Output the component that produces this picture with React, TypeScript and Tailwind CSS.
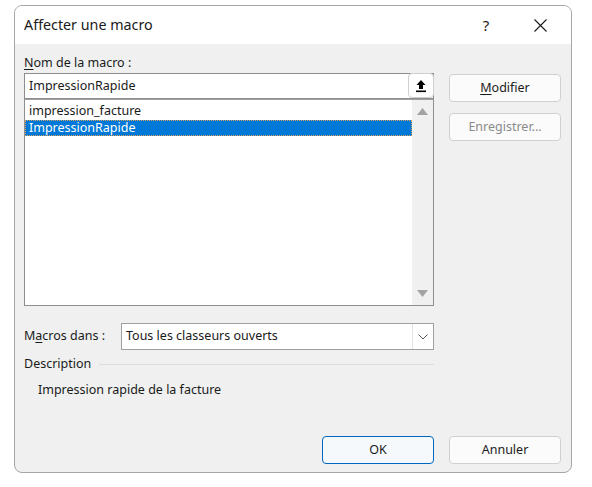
import React from "react";

const font = { fontFamily: '"Noto Sans", "Open Sans", sans-serif' };

function UploadIcon() {
  return (
    <svg width="12" height="14" viewBox="0 0 12 14">
      <path d="M6 1 L1.5 6 H4 V10 H8 V6 H10.5 Z" fill="#000" />
      <rect x="1" y="11.5" width="10" height="1.6" fill="#000" />
    </svg>
  );
}

function Btn({ children, disabled, primary, w = "w-[112px]" }: { children: React.ReactNode; disabled?: boolean; primary?: boolean; w?: string }) {
  return (
    <div
      className={`${w} h-[28px] flex items-center justify-center rounded-[4px] text-[12.5px] ${
        primary ? "border border-[#0067c0] bg-[#f6f9fc] text-[#1a1a1a]" : "border border-[#d0d0d0] bg-[#fbfbfb]"
      } ${disabled ? "text-[#8a8a8a]" : "text-[#1a1a1a]"}`}
    >
      {children}
    </div>
  );
}

export default function App() {
  return (
    <div className="w-[592px] h-[487px] bg-white" style={font}>
      <div className="pt-[5px] pl-[14px]">
        <div className="w-[558px] h-[468px] rounded-[8px] border border-[#a6a6a6] overflow-hidden flex flex-col bg-[#f0f0f0]">
          {/* Title bar */}
          <div className="h-[38px] bg-white flex items-center shrink-0">
            <div className="pl-[9px] text-[14.3px] text-[#1a1a1a] flex-1">Affecter une macro</div>
            <div className="w-[20px] text-center text-[15px] text-[#1a1a1a] mr-[38px]">?</div>
            <svg width="13" height="13" viewBox="0 0 13 13" className="mr-[24px]">
              <path d="M0.5 0.5 L12.5 12.5 M12.5 0.5 L0.5 12.5" stroke="#1a1a1a" strokeWidth="1.1" />
            </svg>
          </div>
          {/* Body */}
          <div className="flex-1 flex flex-col">
            <div className="flex pl-[9px] pt-[10px]">
              <div className="w-[410px] flex flex-col">
                <div className="h-[17px] flex items-center text-[12.5px] text-[#1a1a1a] mb-[2px] pt-[1px]">
                  <span className="underline underline-offset-2">N</span>om de la macro :
                </div>
                <div className="h-[26px] border border-[#8e8e8e] bg-white flex items-center">
                  <div className="flex-1 pl-[4px] text-[12.5px] text-[#1a1a1a]">ImpressionRapide</div>
                  <div className="w-[26px] h-[25px] -mr-px -mt-px border border-[#cfcfcf] rounded-[4px] bg-white flex items-center justify-center">
                    <UploadIcon />
                  </div>
                </div>
                <div className="h-[207px] border border-[#8e8e8e] border-t-[#a0a0a0] bg-white flex">
                  <div className="flex-1 pt-[3px] text-[12.5px]">
                    <div className="h-[17px] pl-[4px] flex items-center text-[#1a1a1a]">impression_facture</div>
                    <div className="h-[16px] pl-[3px] flex items-center text-white bg-[#0078d7] border border-dotted border-[#d9a35a]">
                      ImpressionRapide
                    </div>
                  </div>
                  <div className="w-[21px] bg-[#f0f0f0] flex flex-col items-center justify-between py-[8px]">
                    <svg width="11" height="7" viewBox="0 0 11 7">
                      <path d="M5.5 0 L11 7 H0 Z" fill="#a3a3a3" />
                    </svg>
                    <svg width="11" height="7" viewBox="0 0 11 7">
                      <path d="M0 0 H11 L5.5 7 Z" fill="#a3a3a3" />
                    </svg>
                  </div>
                </div>
                <div className="flex items-center mt-[17px]">
                  <div className="w-[97px] text-[12.5px] text-[#1a1a1a]">
                    M<span className="underline underline-offset-2">a</span>cros dans :
                  </div>
                  <div className="flex-1 h-[27px] border border-[#a0a0a0] bg-white flex items-center">
                    <div className="flex-1 pl-[4px] text-[12.5px] text-[#1a1a1a]">Tous les classeurs ouverts</div>
                    <div className="w-[21px] h-full border-l border-[#e3e3e3] flex items-center justify-center">
                      <svg width="10" height="6" viewBox="0 0 10 6">
                        <path d="M0.5 0.5 L5 5 L9.5 0.5" stroke="#555" strokeWidth="1" fill="none" />
                      </svg>
                    </div>
                  </div>
                </div>
                <div className="flex items-center mt-[4px] h-[20px]">
                  <div className="text-[12.5px] text-[#1a1a1a] pr-[8px]">Description</div>
                  <div className="flex-1 h-px bg-[#dcdcdc]" />
                </div>
                <div className="pl-[14px] mt-[6px] text-[12.5px] text-[#1a1a1a] h-[20px] flex items-center">
                  Impression rapide de la facture
                </div>
              </div>
              <div className="ml-[15px] flex flex-col gap-[11px] pt-[20px]">
                <Btn>
                  <span><span className="underline underline-offset-2">M</span>odifier</span>
                </Btn>
                <Btn disabled>Enregistrer...</Btn>
              </div>
            </div>
            <div className="flex-1" />
            <div className="flex justify-end gap-[15px] pr-[10px] pb-[8px]">
              <Btn primary>OK</Btn>
              <Btn>Annuler</Btn>
            </div>
          </div>
        </div>
      </div>
    </div>
  );
}
